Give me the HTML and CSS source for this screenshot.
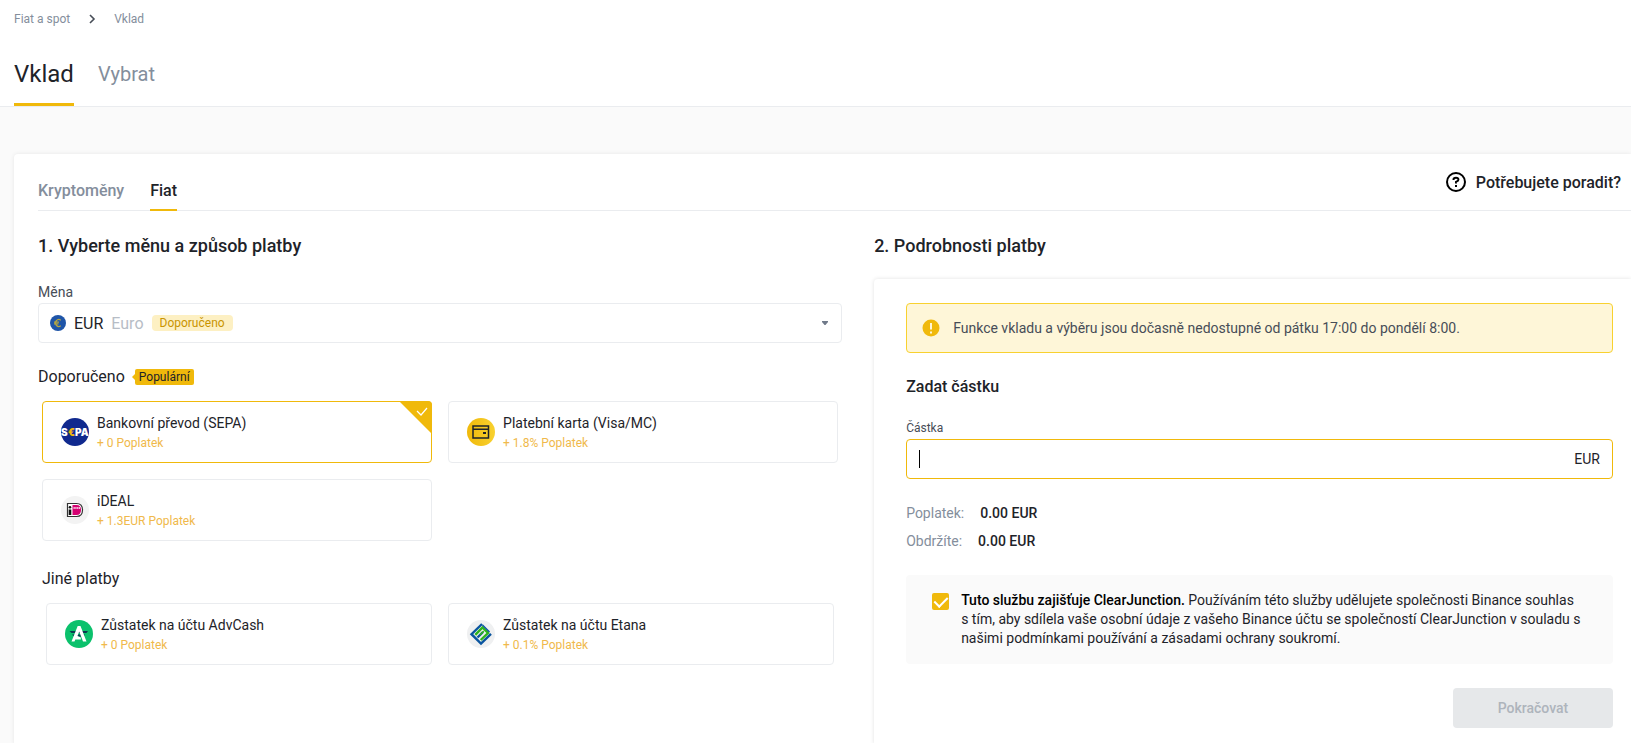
FILE: index.html
```html
<!DOCTYPE html>
<html lang="cs">
<head>
    <meta charset="UTF-8">
    <meta name="viewport" content="width=device-width, initial-scale=1.0">
    <title>Vklad</title>
    <link rel="stylesheet" href="styles.css">
</head>
<body>
    <header class="header">
        <nav class="breadcrumb">
            <a href="#">Fiat a spot</a>
            <svg width="8" height="10" viewBox="0 0 8 10" fill="none" stroke="#474d57" stroke-width="1.600"><path d="M2 1l4 4-4 4"/></svg>
            <a href="#">Vklad</a>
        </nav>
        <nav class="main-tabs">
            <a href="#" class="main-tab active">Vklad</a>
            <a href="#" class="main-tab">Vybrat</a>
        </nav>
    </header>
    <main class="card">
        <div class="topbar">
            <nav class="sub-tabs">
                <a href="#" class="sub-tab">Kryptoměny</a>
                <a href="#" class="sub-tab active">Fiat</a>
            </nav>
            <a href="#" class="help">
                <svg width="20" height="20" viewBox="0 0 20 20" fill="none" stroke="#000" stroke-width="2"><circle cx="10" cy="10" r="9"/><path d="M7.500 8V7.600Q7.500 5.800 10 5.800T12.400 7.800Q12.400 9.200 10 9.900V11.600"/><path d="M10 13v2"/></svg>
                Potřebujete poradit?
            </a>
        </div>
        <div class="columns">
            <section>
                <h2>1. Vyberte měnu a způsob platby</h2>
                <label class="label" for="currency">Měna</label>
                <div class="select">
                    <svg width="16" height="16" viewBox="0 0 16 16"><circle cx="8" cy="8" r="8" fill="#1f55a8"/><path d="M10.800 5.200A3.400 3.400 0 1 0 10.800 10.800M4 7.200h5M4 8.900h4.500" fill="none" stroke="#b5a642" stroke-width="1.200"/></svg>
                    <span class="code">EUR</span>
                    <span class="name">Euro</span>
                    <span class="tag">Doporučeno</span>
                    <svg class="arrow" width="8" height="6" viewBox="0 0 8 6"><path d="M1 1h6v1L4.500 5h-1L1 2z" fill="#707a8a"/></svg>
                    <select id="currency">
                        <option>EUR</option>
                    </select>
                </div>
                <h3>Doporučeno <span class="popular">Populární</span></h3>
                <div class="methods">
                    <button type="button" class="method selected">
                        <svg width="28" height="28" viewBox="0 0 28 28"><circle cx="14" cy="14" r="14" fill="#10298e"/><g class="sepa"><text x="0" y="18" fill="#fff">S</text><text x="7" y="18" fill="#f0b90b">€</text><text x="14" y="18" fill="#fff">PA</text></g></svg>
                        <span class="text">
                            <span class="title">Bankovní převod (SEPA)</span>
                            <span class="fee">+ 0 Poplatek</span>
                        </span>
                        <svg class="corner" width="33" height="33" viewBox="0 0 33 33"><path d="M0 0h33v33z" fill="#f0b90b"/><path d="M18 10l4 4 6-7" fill="none" stroke="#fff" stroke-width="1.200"/></svg>
                    </button>
                    <button type="button" class="method">
                        <svg width="28" height="28" viewBox="0 0 28 28"><defs><linearGradient id="gold"><stop stop-color="#f0b90b"/><stop offset="1" stop-color="#f8d12f"/></linearGradient></defs><circle cx="14" cy="14" r="14" fill="url(#gold)"/><path d="M6 8h15.500v12H6zM6 11.300h15.500" fill="none" stroke="#1e2329" stroke-width="1.500"/><path d="M16 14h3v2h-3z" fill="#1e2329"/></svg>
                        <span class="text">
                            <span class="title">Platební karta (Visa/MC)</span>
                            <span class="fee">+ 1.8% Poplatek</span>
                        </span>
                    </button>
                    <button type="button" class="method">
                        <svg width="28" height="28" viewBox="0 0 28 28"><circle cx="14" cy="14" r="14" fill="#f3f3f3"/><path d="M6.500 7.500h9q6 0 6 6.500t-6 6.500h-9z" fill="#fff" stroke="#333" stroke-width="1.200"/><path d="M11.500 9h4q4.500 0 4.500 5t-4.500 5h-4z" fill="#d50072"/><path d="M7.700 13.500h2.600V19H7.700z" fill="#111"/><circle cx="9" cy="11.200" r="1.300" fill="#111"/><path d="M12.500 12h6.500" stroke="#fff" stroke-width="1.600" stroke-dasharray="1.300 .5"/></svg>
                        <span class="text">
                            <span class="title">iDEAL</span>
                            <span class="fee">+ 1.3EUR Poplatek</span>
                        </span>
                    </button>
                </div>
                <div class="others">
                    <h3>Jiné platby</h3>
                    <div class="methods">
                        <button type="button" class="method">
                            <svg width="28" height="28" viewBox="0 0 28 28"><circle cx="14" cy="14" r="14" fill="#0bc16c"/><path d="M4.500 11h18.500l-1.500 2H6.500zM7 14.500h13l-1.500 2H9z" fill="#0c3a50"/><path d="M12.700 6h2.800L21.500 21.500h-3.500L14.200 11.500 12.500 16l3.300 1.500v2h-5.500l-.8 2H6.500z" fill="#fff"/></svg>
                            <span class="text">
                                <span class="title">Zůstatek na účtu AdvCash</span>
                                <span class="fee">+ 0 Poplatek</span>
                            </span>
                        </button>
                        <button type="button" class="method">
                            <svg width="28" height="28" viewBox="0 0 28 28"><circle cx="14" cy="14" r="14" fill="#eff0f1"/><g fill="none" stroke-width="2.400"><path d="M15 4L4.500 14.200 14 23.500l10-9.700" stroke="#0a559f"/><path d="M8.300 14.800L15.500 7.500l5.500 5.500-7.300 7" stroke="#2db41c"/><path d="M15.500 5l7 7" stroke="#0a559f" stroke-width="1.400"/><path d="M10.500 17.500l5.500-5.500" stroke="#0a559f"/><path d="M13 14.800l3.800-3.600" stroke="#2db41c" stroke-width="1.600"/></g></svg>
                            <span class="text">
                                <span class="title">Zůstatek na účtu Etana</span>
                                <span class="fee">+ 0.1% Poplatek</span>
                            </span>
                        </button>
                    </div>
                </div>
            </section>
            <section>
                <h2>2. Podrobnosti platby</h2>
                <form class="panel">
                    <div class="alert">
                        <svg width="18" height="18" viewBox="0 0 18 18"><circle cx="9" cy="9" r="8.500" fill="#f0b90b"/><path d="M8 4h2v6.500H8zM8 12.500h2v2H8z" fill="#fef6d8"/></svg>
                        Funkce vkladu a výběru jsou dočasně nedostupné od pátku 17:00 do pondělí 8:00.
                    </div>
                    <h3>Zadat částku</h3>
                    <label class="label small" for="amount">Částka</label>
                    <div class="amount">
                        <span class="caret"></span>
                        <input type="text" id="amount">
                        <span>EUR</span>
                    </div>
                    <p class="row">Poplatek: <span>0.00 EUR</span></p>
                    <p class="row">Obdržíte: <span>0.00 EUR</span></p>
                    <div class="consent">
                        <input type="checkbox" id="agree" checked>
                        <label for="agree"><b>Tuto službu zajišťuje ClearJunction.</b> Používáním této služby udělujete společnosti Binance souhlas s&nbsp;tím, aby sdílela vaše osobní údaje z vašeho Binance účtu se společností ClearJunction v souladu s našimi podmínkami používání a zásadami ochrany soukromí.</label>
                    </div>
                    <button type="submit" class="submit" disabled>Pokračovat</button>
                </form>
            </section>
        </div>
    </main>
</body>
</html>
```

FILE: styles.css
```css
* {
    box-sizing: border-box;
}
body {
    margin: 0;
    min-height: 100vh;
    display: flex;
    flex-direction: column;
    background-color: #fafafa;
    font-family: Roboto, "Liberation Sans", sans-serif;
    font-size: 14px;
    color: #1e2329;
}
a {
    color: inherit;
    text-decoration: none;
}
svg {
    flex-shrink: 0;
}
h2, h3, p {
    margin: 0;
}
.header {
    padding-left: 14px;
    background-color: #fff;
    border-bottom: 1px solid #eaecef;
}
.breadcrumb {
    display: flex;
    align-items: center;
    gap: 18px;
    height: 38px;
    font-size: 12px;
    color: #848e9c;
}
.main-tabs {
    display: flex;
    gap: 24px;
    height: 68px;
    line-height: 72px;
}
.main-tab {
    font-size: 20px;
    color: #848e9c;
}
.main-tab.active {
    font-size: 24px;
    color: #1e2329;
    border-bottom: 3px solid #f0b90b;
}
.card {
    flex: 1;
    margin: 47px 0 0 14px;
    padding-left: 24px;
    background-color: #fff;
    border-radius: 4px 0 0 0;
    box-shadow: 0 0 4px rgba(0, 0, 0, 0.08);
}
.topbar {
    display: flex;
    justify-content: space-between;
    height: 57px;
    padding-right: 10px;
    border-bottom: 1px solid #eaecef;
    font-size: 16px;
    font-weight: 500;
}
.sub-tabs {
    display: flex;
    gap: 26px;
}
.sub-tab {
    height: 57px;
    padding-top: 25px;
    line-height: 24px;
    color: #848e9c;
}
.sub-tab.active {
    color: #1e2329;
    border-bottom: 2px solid #f0b90b;
}
.help {
    display: flex;
    align-items: center;
    gap: 10px;
    height: 56px;
}
.columns {
    display: grid;
    grid-template-columns: 17fr 16fr;
    gap: 32px;
}
h2 {
    padding-top: 22px;
    font-size: 18px;
    font-weight: 500;
    line-height: 26px;
}
h3 {
    display: flex;
    align-items: center;
    gap: 10px;
    font-size: 16px;
    font-weight: 400;
    line-height: 24px;
}
.label {
    display: block;
    margin-top: 22px;
    line-height: 22px;
    color: #474d57;
}
.select {
    position: relative;
    display: flex;
    align-items: center;
    gap: 8px;
    height: 40px;
    padding: 0 12px 0 11px;
    border: 1px solid #eaecef;
    border-radius: 4px;
    font-size: 16px;
}
.select select {
    position: absolute;
    inset: 0;
    width: 100%;
    opacity: 0;
}
.name {
    color: #b7bdc6;
}
.tag {
    padding: 0 8px;
    border-radius: 4px;
    background-color: #fdf0c3;
    color: #c99400;
    font-size: 12px;
    line-height: 16px;
}
.arrow {
    margin-left: auto;
}
.select + h3 {
    margin: 22px 0 12px;
}
.popular {
    position: relative;
    padding: 0 4px;
    border-radius: 2px;
    background-color: #f0b90b;
    font-size: 12px;
    line-height: 16px;
}
.popular::before {
    content: "";
    position: absolute;
    left: -3px;
    top: 5px;
    border: 3px solid transparent;
    border-left: 0;
    border-right-color: #f0b90b;
}
.methods {
    display: grid;
    grid-template-columns: 1fr 1fr;
    gap: 16px;
    padding: 0 4px;
}
.method {
    position: relative;
    display: flex;
    align-items: center;
    gap: 8px;
    height: 62px;
    padding: 0 18px;
    border: 1px solid #eaecef;
    border-radius: 4px;
    background-color: #fff;
    font-family: inherit;
    text-align: left;
    cursor: pointer;
}
.method.selected {
    border-color: #f0b90b;
}
.corner {
    position: absolute;
    top: -1px;
    right: -1px;
    border-top-right-radius: 4px;
}
.sepa {
    font-family: Inter, sans-serif;
    font-size: 10px;
    font-weight: 900;
}
.text {
    padding-top: 2px;
}
.title, .fee {
    display: block;
    line-height: 20px;
}
.title {
    font-size: 14px;
    color: #1e2329;
}
.fee {
    font-size: 12px;
    color: #f0b94b;
}
.others {
    padding: 26px 4px 0;
}
.others h3 {
    margin-bottom: 12px;
}
.panel {
    display: flex;
    flex-direction: column;
    margin-top: 20px;
    padding: 24px 18px 16px 32px;
    border-radius: 4px 0 0 0;
    box-shadow: 0 0 4px rgba(0, 0, 0, 0.12);
}
.alert {
    display: flex;
    align-items: center;
    gap: 13px;
    min-height: 50px;
    padding: 0 15px;
    border: 1px solid #f8d12f;
    border-radius: 4px;
    background-color: #fef6d8;
    color: #474d57;
}
.panel h3 {
    margin-top: 22px;
    font-weight: 500;
}
.label.small {
    font-size: 12px;
    margin-top: 18px;
}
.amount {
    display: flex;
    align-items: center;
    height: 40px;
    margin-bottom: 20px;
    padding: 0 12px;
    border: 1px solid #f0b90b;
    border-radius: 4px;
}
.amount input {
    flex: 1;
    border: 0;
    outline: 0;
    font: inherit;
}
.caret {
    width: 1px;
    height: 18px;
    background-color: #000;
}
.row {
    display: flex;
    gap: 16px;
    line-height: 28px;
    color: #848e9c;
}
.row span {
    font-weight: 500;
    color: #1e2329;
}
.consent {
    display: flex;
    gap: 12px;
    margin: 20px 0 24px;
    padding: 16px 24px 16px 26px;
    border-radius: 4px;
    background-color: #fafafa;
    line-height: 19px;
}
.consent b {
    font-weight: 500;
    color: #000;
}
.consent input {
    flex-shrink: 0;
    appearance: none;
    width: 17px;
    height: 17px;
    margin: 2px 0 0;
    border-radius: 2px;
    background-color: #f0b90b;
}
.consent input::before {
    content: "";
    display: block;
    width: 6px;
    height: 11px;
    margin: 1px auto 0;
    border: solid #fff;
    border-width: 0 2px 2px 0;
    transform: rotate(45deg);
}
.submit {
    align-self: flex-end;
    width: 160px;
    height: 40px;
    border: 0;
    border-radius: 4px;
    background-color: #e6e8ea;
    color: #aeb4bc;
    font-family: inherit;
    font-size: 14px;
    font-weight: 500;
}
```
